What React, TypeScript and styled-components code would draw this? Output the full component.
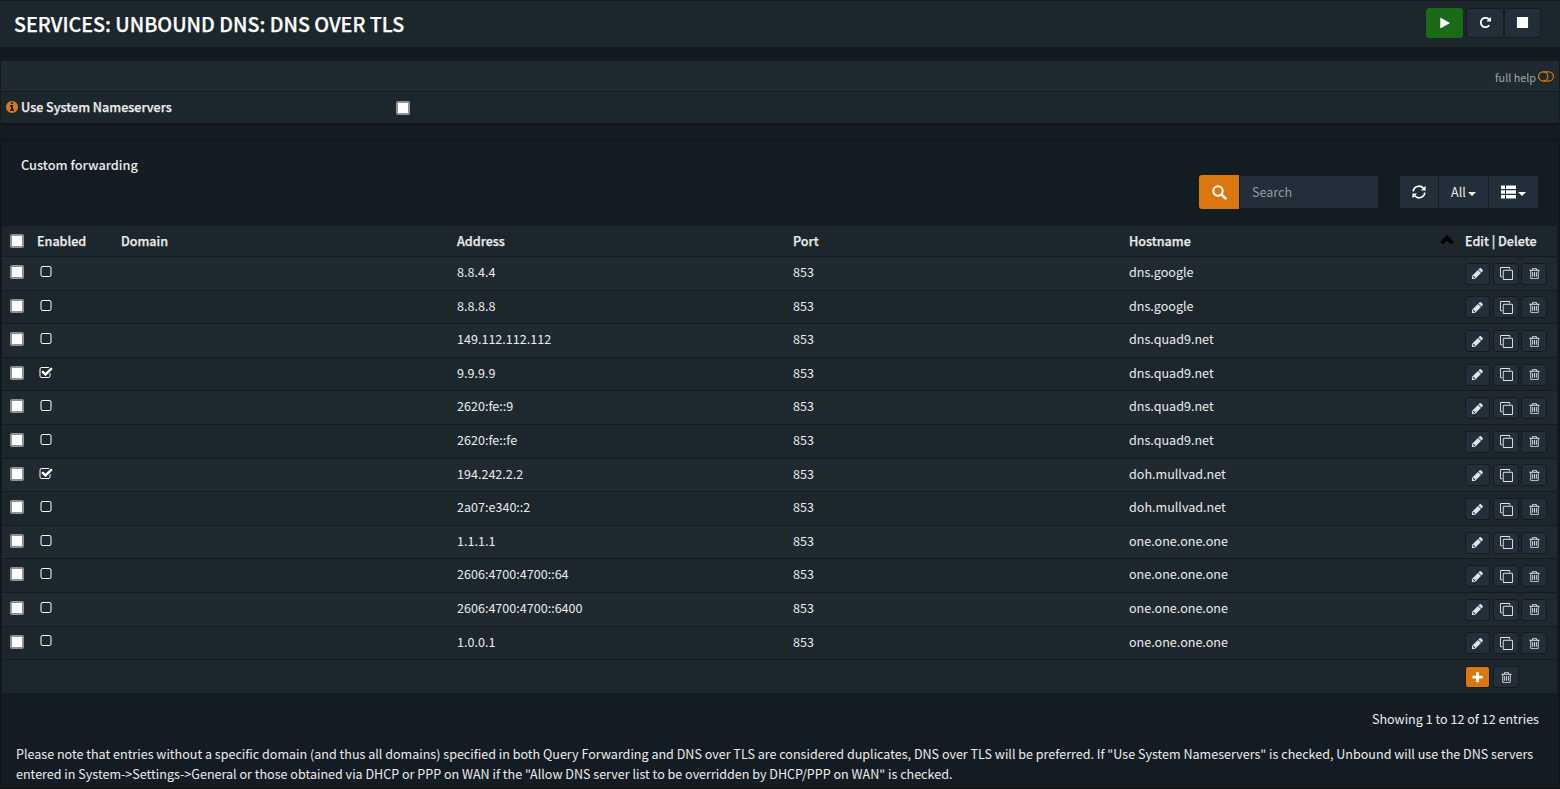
import React from 'react';
import styled, { createGlobalStyle, css } from 'styled-components';

const GlobalStyle = createGlobalStyle`
  *, *::before, *::after { box-sizing: border-box; }
  html, body { margin: 0; padding: 0; background: #141c23; }
  body {
    height: 789px;
    overflow: hidden;
    font-family: "Noto Sans CJK SC", "Open Sans", sans-serif;
    font-size: 12.57px;
    line-height: 20px;
    color: #ececec;
  }
`;

const line = '#191919';
const control = '#222e39';

const semibold = css`
  font-weight: 500;
  -webkit-text-stroke: 0.25px currentColor;
`;

const Page = styled.div`
  width: 100%;
  height: 789px;
  display: flex;
  flex-direction: column;
`;

const PageHead = styled.header`
  height: 47px;
  flex: none;
  display: flex;
  align-items: flex-start;
  justify-content: space-between;
  padding: 7px 19px 0 14px;
  background: #1b262d;
  border-top: 1px solid ${line};
  box-shadow: 0 2px 5px 1px #181818;
`;

const Title = styled.h1`
  ${semibold}
  margin: 2px 0 0;
  font-size: 19.7px;
  line-height: 28px;
  color: #fff;
  white-space: nowrap;
`;

const ServiceButtons = styled.div`
  display: flex;
`;

const ServiceButton = styled.button<{ $go?: boolean }>`
  width: ${(p) => (p.$go ? 37 : 38)}px;
  height: 30px;
  margin: 0 ${(p) => (p.$go ? 3 : 0)}px 0 0;
  padding: 0 0 1px;
  display: flex;
  align-items: center;
  justify-content: center;
  color: #fff;
  background: ${(p) => (p.$go ? '#1b6a18' : control)};
  border: 1px solid ${(p) => (p.$go ? '#1b6a18' : line)};
  border-radius: 3px;
  & + & + & { width: 37px; }
`;

const SettingsPanel = styled.section`
  flex: none;
  margin: 12px 0 0;
  height: 64px;
  border: 1px solid ${line};
  border-top-width: 2px;
  border-bottom: 0;
  box-shadow: 0 2px 5px 0 #121416;
`;

const HelpRow = styled.div`
  height: 31px;
  display: flex;
  justify-content: flex-end;
  align-items: center;
  gap: 2px;
  padding: 1px 5px 0 0;
  background: #1e2930;
  border-bottom: 1px solid ${line};
  font-size: 10.8px;
  color: #a3a8ab;
`;

const SettingRow = styled.div`
  height: 31px;
  display: flex;
  align-items: center;
  padding-left: 4px;
  background: #1b262d;
`;

const SettingLabel = styled.label`
  ${semibold}
  width: 391px;
  height: 22px;
  display: flex;
  align-items: flex-start;
  gap: 2px;
`;

const InfoMark = styled.span`
  display: flex;
  padding-top: 3px;
`;

const Box = styled.span`
  display: block;
  flex: none;
  width: 14px;
  height: 14px;
  background: #fff;
  border: 2px solid #8f8f9d;
  border-radius: 2px;
`;

const Content = styled.main`
  flex: 1;
  margin-top: 16px;
  border: 1px solid #111416;
  background: #141c23;
`;

const SectionTitle = styled.div`
  height: 35px;
  padding: 15px 20px 0;
  font-size: 12.75px;
  font-weight: 500;
`;

const Toolbar = styled.div`
  height: 50px;
  display: flex;
  justify-content: flex-end;
  align-items: flex-start;
  padding-right: 20px;
`;

const SearchGroup = styled.div`
  display: flex;
  align-items: center;
  margin-right: 21px;
`;

const SearchButton = styled.div`
  width: 40px;
  height: 34px;
  display: flex;
  align-items: center;
  justify-content: center;
  background: #d97710;
  border-radius: 3px 0 0 3px;
  color: #fff;
`;

const SearchField = styled.div`
  width: 140px;
  height: 34px;
  padding: 6px 12px;
  background: ${control};
  border: 1px solid ${line};
  border-radius: 0 3px 3px 0;
  color: #979c9f;
`;

const ToolButton = styled.div<{ $w: number }>`
  width: ${(p) => p.$w}px;
  height: 34px;
  display: flex;
  align-items: center;
  justify-content: center;
  gap: 2px;
  background: ${control};
  border: 1px solid ${line};
  margin-left: -1px;
  &:first-of-type { border-radius: 3px 0 0 3px; }
  &:last-of-type { border-radius: 0 3px 3px 0; }
`;

const ToolGroup = styled.div`
  display: flex;
`;

const Caret = styled.span`
  width: 0;
  height: 0;
  margin-top: 3px;
  border-left: 4px solid transparent;
  border-right: 4px solid transparent;
  border-top: 4px solid #fff;
`;

const Table = styled.div`
  margin: 0 1px 0 1px;
  border-top: 1px solid ${line};
  border-right: 1px solid ${line};
`;

const rowGrid = css`
  display: grid;
  grid-template-columns: 35px 84px 336px 336px 336px 336px 1fr;
`;

const HeadRow = styled.div`
  ${rowGrid}
  ${semibold}
  height: 31px;
  padding-top: 5px;
  background: #1b262d;
  border-bottom: 1px solid ${line};
`;

const Row = styled.div<{ $odd: boolean }>`
  ${rowGrid}
  height: 33.6px;
  padding-top: 5.05px;
  background: ${(p) => (p.$odd ? '#1e2930' : '#1b262d')};
  border-bottom: 1px solid ${line};
`;

const CheckCell = styled.div`
  padding: 3px 0 0 8px;
`;

const StateCell = styled.div`
  padding: 2.9px 0 0 2px;
  line-height: 0;
`;

const HostHead = styled.div`
  display: flex;
  justify-content: space-between;
  align-items: flex-start;
  padding-right: 11px;
`;

const SortMark = styled.span`
  display: flex;
  padding-top: 4px;
`;

const Commands = styled.div`
  display: flex;
  align-items: flex-start;
  gap: 2px;
  padding-top: 0.8px;
  white-space: nowrap;
`;

const CommandButton = styled.button<{ $add?: boolean }>`
  width: 26px;
  height: 22px;
  padding: 0;
  display: flex;
  align-items: center;
  justify-content: center;
  color: ${(p) => (p.$add ? '#fff' : '#e2e4e5')};
  background: ${(p) => (p.$add ? '#d97710' : control)};
  border: 1px solid ${line};
  border-radius: 3px;
  &:first-child { width: 25px; margin-right: 1px; }
`;

const FootRow = styled.div`
  ${rowGrid}
  height: 33px;
  padding-top: 5.2px;
  background: #1b262d;
`;

const FootCommands = styled(Commands)`
  grid-column: 7;
`;

const Summary = styled.div`
  padding: 16px 20px 0 0;
  text-align: right;
`;

const Note = styled.p`
  margin: 15px 0 0 15px;
  font-size: 12.55px;
  white-space: nowrap;
`;

const trashBar = (x: number) =>
  `M${x} 736v576q0 14-9 23t-23 9h-64q-14 0-23-9t-9-23v-576q0-14 9-23t23-9h64q14 0 23 9t9 23z`;

const icons = {
  play: 'M1576 927l-1328 738q-23 13-39.5 3t-16.5-36v-1472q0-26 16.5-36t39.5 3l1328 738q23 13 23 31t-23 31z',
  stop: 'M1664 192v1408q0 26-19 45t-45 19h-1408q-26 0-45-19t-19-45v-1408q0-26 19-45t45-19h1408q26 0 45 19t19 45z',
  repeat:
    'M1664 256v448q0 26-19 45t-45 19h-448q-42 0-59-40-17-39 14-69l138-138q-148-137-349-137-104 0-198.5 40.5t-163.5 109.5-109.5 163.5-40.5 198.5 40.5 198.5 109.5 163.5 163.5 109.5 198.5 40.5q119 0 225-52t179-147q7-10 23-12 15 0 25 9l137 138q9 8 9.5 20.5t-7.5 22.5q-109 132-264 204.5t-327 72.5q-156 0-298-61t-245-164-164-245-61-298 61-298 164-245 245-164 298-61q147 0 284.5 55.5t244.5 156.5l130-129q29-31 70-14 39 17 39 59z',
  square:
    'M1312 256h-832q-66 0-113 47t-47 113v832q0 66 47 113t113 47h832q66 0 113-47t47-113v-832q0-66-47-113t-113-47zm288 160v832q0 119-84.5 203.5t-203.5 84.5h-832q-119 0-203.5-84.5t-84.5-203.5v-832q0-119 84.5-203.5t203.5-84.5h832q119 0 203.5 84.5t84.5 203.5z',
  checkSquare:
    'M1472 930v318q0 119-84.5 203.5t-203.5 84.5h-832q-119 0-203.5-84.5t-84.5-203.5v-832q0-119 84.5-203.5t203.5-84.5h832q63 0 117 25 15 7 18 23 3 17-9 29l-49 49q-10 10-23 10-3 0-9-2-23-6-45-6h-832q-66 0-113 47t-47 113v832q0 66 47 113t113 47h832q66 0 113-47t47-113v-254q0-13 9-22l64-64q10-10 23-10 6 0 12 3 20 8 20 29zm231-489l-814 814q-24 24-57 24t-57-24l-430-430q-24-24-24-57t24-57l110-110q24-24 57-24t57 24l263 263 647-647q24-24 57-24t57 24l110 110q24 24 24 57t-24 57z',
  pencil:
    'M491 1536l91-91-235-235-91 91v107h128v128h107zM960 416l416 416-832 832h-416v-416zm683 96q0 53-37 90l-166 166-416-416 166-165q36-38 90-38 53 0 91 38l235 234q37 39 37 91z',
  clone:
    'M1664 1632v-1088q0-13-9.5-22.5t-22.5-9.5h-1088q-13 0-22.5 9.5t-9.5 22.5v1088q0 13 9.5 22.5t22.5 9.5h1088q13 0 22.5-9.5t9.5-22.5zm128-1088v1088q0 66-47 113t-113 47h-1088q-66 0-113-47t-47-113v-1088q0-66 47-113t113-47h1088q66 0 113 47t47 113zm-384-384v160h-128v-160q0-13-9.5-22.5t-22.5-9.5h-1088q-13 0-22.5 9.5t-9.5 22.5v1088q0 13 9.5 22.5t22.5 9.5h160v128h-160q-66 0-113-47t-47-113v-1088q0-66 47-113t113-47h1088q66 0 113 47t47 113z',
  trash:
    trashBar(704) + trashBar(960) + trashBar(1216) +
    'M1344 1460v-948h-896v948q0 22 7 40.5t14.5 27 10.5 8.5h832q3 0 10.5-8.5t14.5-27 7-40.5zm-672-1076h448l-48-117q-7-9-17-11h-317q-10 2-17 11zm928 32v64q0 14-9 23t-23 9h-96v948q0 83-47 143.5t-113 60.5h-832q-66 0-113-58.5t-47-141.5v-952h-96q-14 0-23-9t-9-23v-64q0-14 9-23t23-9h309l70-167q15-37 54-63t79-26h320q40 0 79 26t54 63l70 167h309q14 0 23 9t9 23z',
  plus: 'M1600 736v192q0 40-28 68t-68 28h-416v416q0 40-28 68t-68 28h-192q-40 0-68-28t-28-68v-416h-416q-40 0-68-28t-28-68v-192q0-40 28-68t68-28h416v-416q0-40 28-68t68-28h192q40 0 68 28t28 68v416h416q40 0 68 28t28 68z',
  info: 'M1152 1376v-160q0-14-9-23t-23-9h-96v-512q0-14-9-23t-23-9h-320q-14 0-23 9t-9 23v160q0 14 9 23t23 9h96v320h-96q-14 0-23 9t-9 23v160q0 14 9 23t23 9h448q14 0 23-9t9-23zm-128-896v-160q0-14-9-23t-23-9h-192q-14 0-23 9t-9 23v160q0 14 9 23t23 9h192q14 0 23-9t9-23zm640 416q0 209-103 385.5t-279.5 279.5-385.5 103-385.5-103-279.5-279.5-103-385.5 103-385.5 279.5-279.5 385.5-103 385.5 103 279.5 279.5 103 385.5z',
};

function Icon({ name, size = 14, color = 'currentColor' }: { name: keyof typeof icons; size?: number; color?: string }) {
  return (
    <svg width={size} height={size} viewBox="0 0 1792 1792" fill={color} fillRule="nonzero">
      <path d={icons[name]} />
    </svg>
  );
}

const SearchIcon = () => (
  <svg width="15" height="15" viewBox="0 0 15 15" fill="none" stroke="#fff">
    <circle cx="6" cy="6" r="4.7" strokeWidth="2" />
    <path d="M9.6 9.6L13.4 13.4" strokeWidth="2.6" strokeLinecap="round" />
  </svg>
);

const RefreshIcon = () => (
  <svg width="14" height="14" viewBox="0 0 14 14" fill="none" stroke="#fff" strokeWidth="1.7">
    <path d="M1.2 6.3A5.8 5.8 0 0 1 11.4 3.3" />
    <path d="M12.8 7.7A5.8 5.8 0 0 1 2.6 10.7" />
    <path d="M13.6 0.8V5.4H9Z" fill="#fff" stroke="none" />
    <path d="M0.4 13.2V8.6H5Z" fill="#fff" stroke="none" />
  </svg>
);

const ListIcon = () => (
  <svg width="15" height="14" viewBox="0 0 15 14" fill="#fff">
    <path d="M0 0.5h4v3.5H0zM5 0.5h10v3.5H5zM0 5.3h4v3.5H0zM5 5.3h10v3.5H5zM0 10h4v3.5H0zM5 10h10v3.5H5z" />
  </svg>
);

const SortIcon = () => (
  <svg width="14" height="10" viewBox="0 0 14 10" fill="none" stroke="#000" strokeWidth="3.8">
    <path d="M1.5 8.3L7 2.8L12.5 8.3" />
  </svg>
);

const ToggleIcon = () => (
  <svg width="16" height="11" viewBox="0 0 16 11" fill="none" stroke="#d97710" strokeWidth="1.25">
    <rect x="0.6" y="0.8" width="14.8" height="9.2" rx="4.6" />
    <path d="M5.2 0.8A4.6 4.6 0 0 1 5.2 10" />
  </svg>
);

const servers: { enabled?: boolean; address: string; host: string }[] = [
  { address: '8.8.4.4', host: 'dns.google' },
  { address: '8.8.8.8', host: 'dns.google' },
  { address: '149.112.112.112', host: 'dns.quad9.net' },
  { address: '9.9.9.9', host: 'dns.quad9.net', enabled: true },
  { address: '2620:fe::9', host: 'dns.quad9.net' },
  { address: '2620:fe::fe', host: 'dns.quad9.net' },
  { address: '194.242.2.2', host: 'doh.mullvad.net', enabled: true },
  { address: '2a07:e340::2', host: 'doh.mullvad.net' },
  { address: '1.1.1.1', host: 'one.one.one.one' },
  { address: '2606:4700:4700::64', host: 'one.one.one.one' },
  { address: '2606:4700:4700::6400', host: 'one.one.one.one' },
  { address: '1.0.0.1', host: 'one.one.one.one' },
];

export default function App() {
  return (
    <Page>
      <GlobalStyle />
      <PageHead>
        <Title>SERVICES: UNBOUND DNS: DNS OVER TLS</Title>
        <ServiceButtons>
          <ServiceButton $go><Icon name="play" size={12} /></ServiceButton>
          <ServiceButton><Icon name="repeat" size={13} /></ServiceButton>
          <ServiceButton><Icon name="stop" size={13} /></ServiceButton>
        </ServiceButtons>
      </PageHead>

      <SettingsPanel>
        <HelpRow>
          <span>full help</span>
          <ToggleIcon />
        </HelpRow>
        <SettingRow>
          <SettingLabel>
            <InfoMark><Icon name="info" size={14} color="#d97710" /></InfoMark>
            Use System Nameservers
          </SettingLabel>
          <Box />
        </SettingRow>
      </SettingsPanel>

      <Content>
        <SectionTitle>Custom forwarding</SectionTitle>
        <Toolbar>
          <SearchGroup>
            <SearchButton><SearchIcon /></SearchButton>
            <SearchField>Search</SearchField>
          </SearchGroup>
          <ToolGroup>
            <ToolButton $w={40}><RefreshIcon /></ToolButton>
            <ToolButton $w={51}>All<Caret /></ToolButton>
            <ToolButton $w={51}><ListIcon /><Caret /></ToolButton>
          </ToolGroup>
        </Toolbar>

        <Table>
          <HeadRow>
            <CheckCell><Box /></CheckCell>
            <div>Enabled</div>
            <div>Domain</div>
            <div>Address</div>
            <div>Port</div>
            <HostHead>Hostname<SortMark><SortIcon /></SortMark></HostHead>
            <div>Edit | Delete</div>
          </HeadRow>
          {servers.map((s, i) => (
            <Row key={s.address} $odd={i % 2 === 0}>
              <CheckCell><Box /></CheckCell>
              <StateCell><Icon name={s.enabled ? 'checkSquare' : 'square'} size={14} color="#fff" /></StateCell>
              <div />
              <div>{s.address}</div>
              <div>853</div>
              <div>{s.host}</div>
              <Commands>
                <CommandButton><Icon name="pencil" size={13} /></CommandButton>
                <CommandButton><Icon name="clone" size={13} /></CommandButton>
                <CommandButton><Icon name="trash" size={13} /></CommandButton>
              </Commands>
            </Row>
          ))}
          <FootRow>
            <FootCommands>
              <CommandButton $add><Icon name="plus" size={13} /></CommandButton>
              <CommandButton><Icon name="trash" size={13} /></CommandButton>
            </FootCommands>
          </FootRow>
        </Table>

        <Summary>Showing 1 to 12 of 12 entries</Summary>
        <Note>
          Please note that entries without a specific domain (and thus all domains) specified in both Query Forwarding and DNS over TLS are considered duplicates, DNS over TLS will be preferred. If "Use System Nameservers" is checked, Unbound will use the DNS servers
          <br />
          entered in System-&gt;Settings-&gt;General or those obtained via DHCP or PPP on WAN if the "Allow DNS server list to be overridden by DHCP/PPP on WAN" is checked.
        </Note>
      </Content>
    </Page>
  );
}
